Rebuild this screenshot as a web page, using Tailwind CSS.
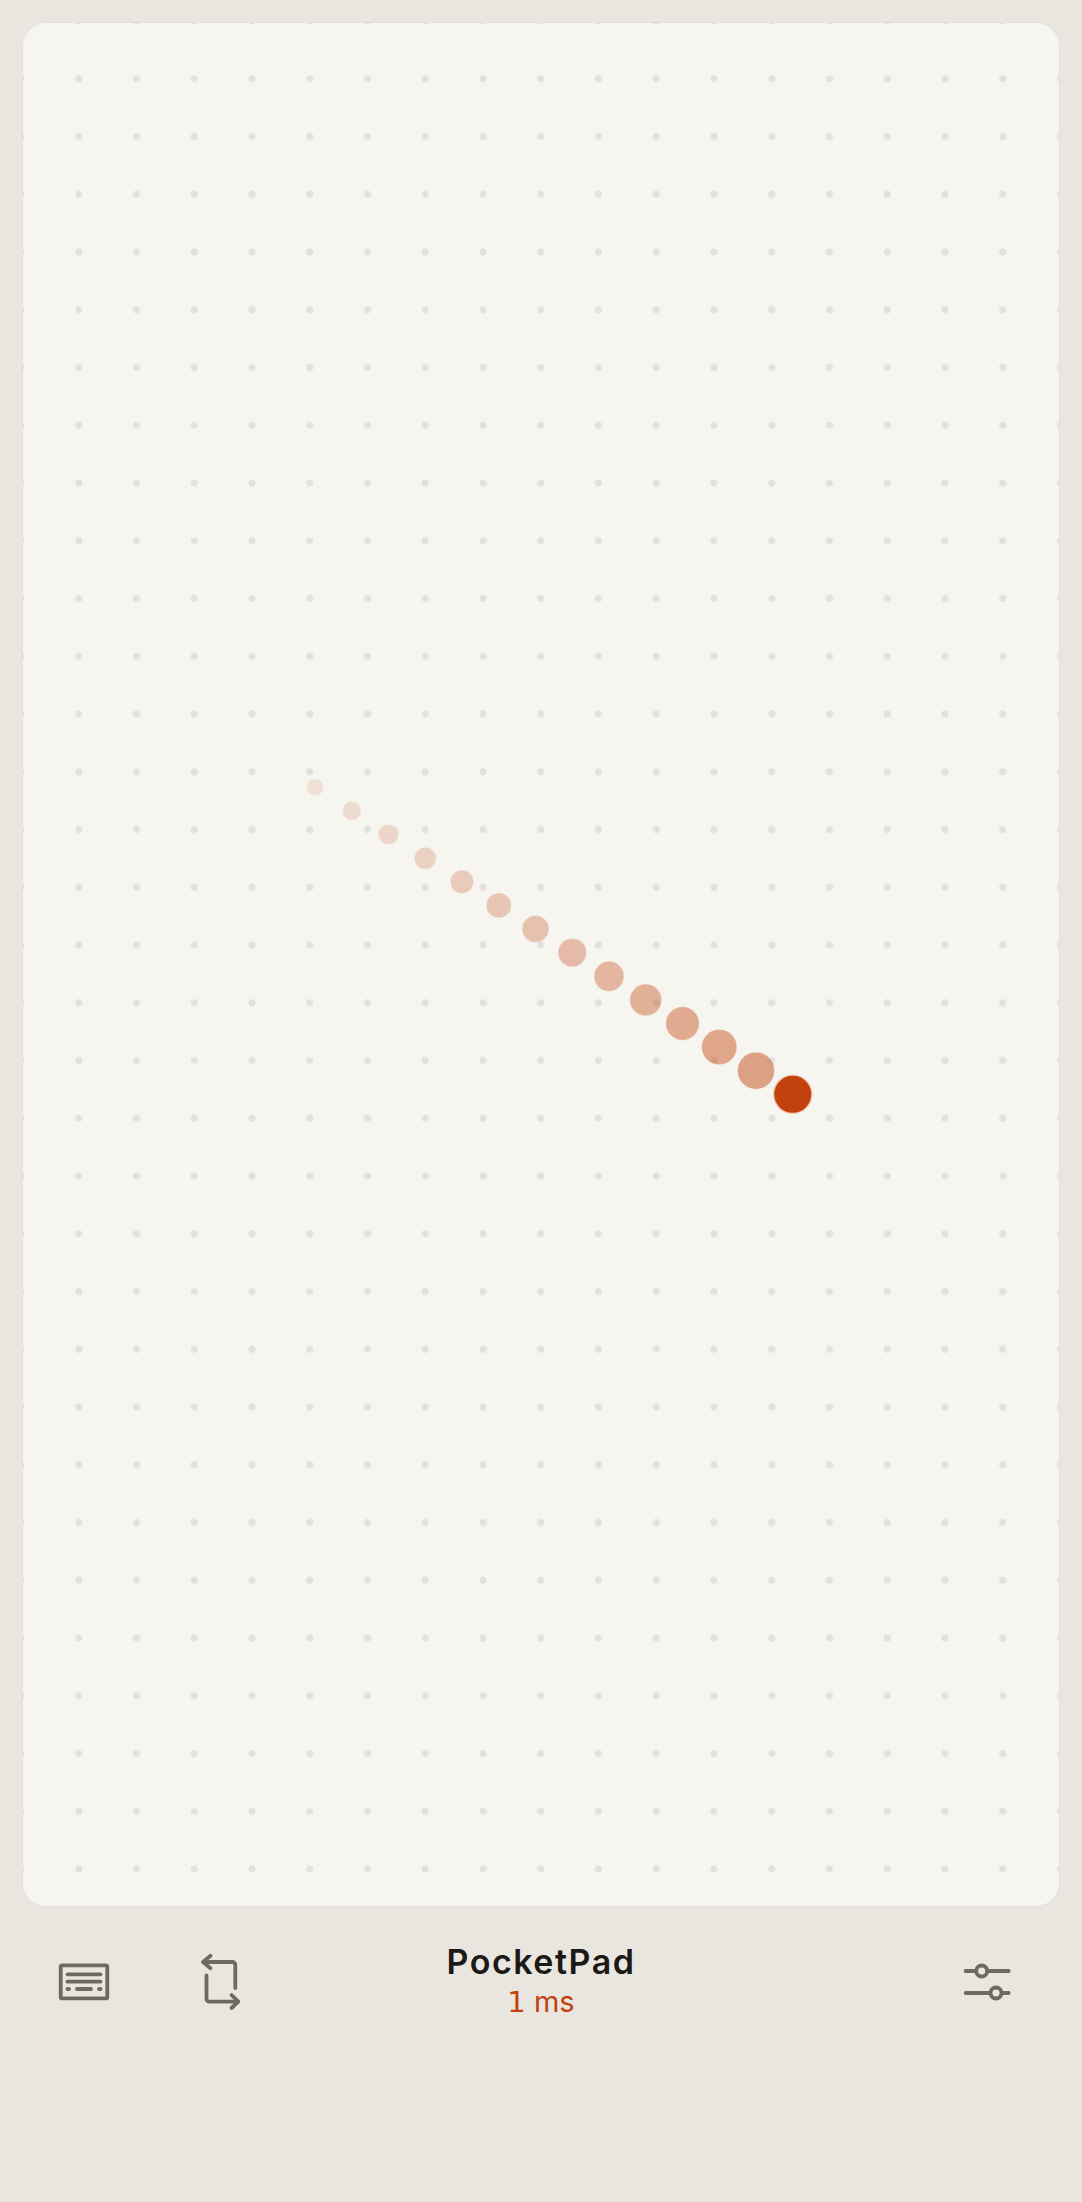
<!DOCTYPE html>
<html lang="en">
<head>
    <meta charset="UTF-8">
    <meta name="viewport" content="width=device-width, initial-scale=1.0">
    <title>PocketPad</title>
    <script src="https://cdn.jsdelivr.net/npm/@tailwindcss/browser@4"></script>
</head>
<body class="bg-[#e9e6df] h-[2202px] overflow-hidden font-['Inter',sans-serif]">

    <!-- Trackpad -->
    <main class="pt-[22px] px-[22px]">
        <div class="relative h-[1885px] rounded-[24px] border border-[#e2e0da] bg-[#f6f5f0] bg-[radial-gradient(circle,#e2e1dd_3.2px,transparent_4px)] [background-size:57.75px_57.75px] [background-position:-30.875px_-30.875px]">
            <!-- Trail -->
            <svg class="absolute inset-0 w-full h-full" fill="#c2410c" stroke="#f6f5f0" stroke-opacity=".35">
                <circle cx="292" cy="764.3" r="8.5" fill-opacity=".11" />
                <circle cx="328.75" cy="787.9" r="9.3" fill-opacity=".14" />
                <circle cx="365.5" cy="811.5" r="10.1" fill-opacity=".17" />
                <circle cx="402.25" cy="835.2" r="10.9" fill-opacity=".2" />
                <circle cx="439" cy="858.8" r="11.7" fill-opacity=".23" />
                <circle cx="475.75" cy="882.4" r="12.5" fill-opacity=".26" />
                <circle cx="512.5" cy="906" r="13.4" fill-opacity=".29" />
                <circle cx="549.25" cy="929.6" r="14.2" fill-opacity=".32" />
                <circle cx="586" cy="953.3" r="15" fill-opacity=".35" />
                <circle cx="622.75" cy="976.9" r="15.9" fill-opacity=".38" />
                <circle cx="659.5" cy="1000.5" r="16.7" fill-opacity=".41" />
                <circle cx="696.25" cy="1024.1" r="17.6" fill-opacity=".44" />
                <circle cx="733" cy="1047.7" r="18.5" fill-opacity=".47" />
                <circle cx="769.75" cy="1071.3" r="19.2" stroke="#f0cdb8" stroke-opacity="1" stroke-width="1.4" />
            </svg>
        </div>
    </main>

    <!-- Barra inferior -->
    <footer class="grid grid-cols-[1fr_auto_1fr] items-center h-[90px] mt-[30px]">
        <div class="flex items-center pl-[56px] gap-[85.7px]">
            <button aria-label="Keyboard" class="text-[#6e6a60]">
                <svg class="w-[56px] h-[56px]" viewBox="0 0 56 56" fill="none" stroke="currentColor" stroke-width="3.8" stroke-linecap="round" stroke-linejoin="round">
                    <rect x="4.7" y="11.4" width="46.6" height="33" rx="1.5" />
                    <path d="M11.5 20.3H44.5M11.5 27.7H44.5M11.5 35H13M21 35H35M43 35H44.5" />
                </svg>
            </button>
            <button aria-label="Rotate" class="text-[#6e6a60]">
                <svg class="w-[56px] h-[56px] overflow-visible" viewBox="0 0 56 56" fill="none" stroke="currentColor" stroke-width="3.8" stroke-linecap="round" stroke-linejoin="round">
                    <path d="M12.5 1.700 5 8H34.3a3 3 0 0 1 3 3V34M5 8 12.5 14.300" />
                    <path d="M8.500 21.500V44.700a3 3 0 0 0 3 3H40.300M33.500 41 40.300 47.700 33.500 54" />
                </svg>
            </button>
        </div>
        <div class="text-center -mt-[2px]">
            <h1 class="text-[34px] leading-[38px] font-semibold tracking-[1.5px] text-[#1c1917]">PocketPad</h1>
            <p class="text-[29px] leading-[34px] mt-[4px] text-[#c2410c]"><span class="font-['DejaVu_Sans']">1</span> ms</p>
        </div>
        <div class="flex justify-end pr-[67px]">
            <button aria-label="Settings" class="text-[#6e6a60]">
                <svg class="w-[56px] h-[56px]" viewBox="0 0 56 56" fill="none" stroke="currentColor" stroke-width="3.8" stroke-linecap="round">
                    <path d="M6.700 17H15M30.500 17H49.700M6.700 39H29.500M44.500 39H49.700" />
                    <circle cx="22.700" cy="17" r="5.500" />
                    <circle cx="37" cy="39" r="5.500" />
                </svg>
            </button>
        </div>
    </footer>
</body>
</html>
